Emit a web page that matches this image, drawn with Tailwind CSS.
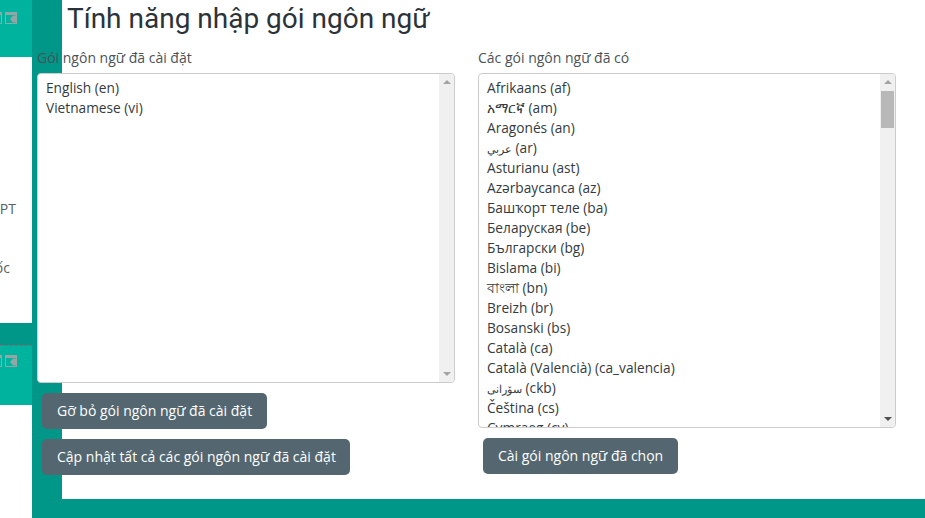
<!DOCTYPE html>
<html lang="vi">
  <head>
    <meta charset="UTF-8" />
    <title>Tính năng nhập gói ngôn ngữ</title>
    <script src="https://cdn.jsdelivr.net/npm/@tailwindcss/browser@4"></script>
  </head>
  <body class="bg-white">
    <div class="flex h-[518px] w-[925px] overflow-hidden font-['Open_Sans','Noto_Sans',sans-serif] text-[14px] leading-[20px] text-[#333b40]">
      <!-- Sidebar, cut off by the window edge -->
      <aside class="w-[32px] shrink-0 overflow-hidden flex flex-col items-end">
        <div class="w-full h-[57px] shrink-0 bg-[#00b39e] flex justify-end items-start pt-[12px] pr-[15px] gap-[3px]">
          <svg class="shrink-0" width="12" height="12" viewBox="0 0 12 12"><rect x="0.5" y="0.5" width="11" height="11" fill="#00b39e" stroke="#93a5a4"/><rect width="12" height="3" fill="#93a5a4"/></svg>
          <svg class="shrink-0" width="12" height="12" viewBox="0 0 12 12"><rect x="0.5" y="0.5" width="11" height="11" fill="#00b39e" stroke="#93a5a4"/><rect width="12" height="3" fill="#93a5a4"/><path d="M8 3.5h3v7H8L5 7z" fill="#93a5a4"/></svg>
        </div>
        <div class="w-full h-[266px] shrink-0 bg-white relative text-[#555f63]">
          <div class="w-[32px] h-[266px] flex flex-col items-end pr-[16px]">
            <span class="mt-[142px]">PT</span>
            <span class="mt-[39px] pr-[6px]">ốc</span>
          </div>
        </div>
        <div class="w-full h-[22px] shrink-0 bg-[#009688]"></div>
        <div class="w-full h-[60px] shrink-0 bg-[#00b39e] border-t border-dashed border-[#8a6470] flex justify-end items-start pt-[9px] pr-[15px] gap-[3px]">
          <svg class="shrink-0" width="12" height="12" viewBox="0 0 12 12"><rect x="0.5" y="0.5" width="11" height="11" fill="#00b39e" stroke="#93a5a4"/><rect width="12" height="3" fill="#93a5a4"/></svg>
          <svg class="shrink-0" width="12" height="12" viewBox="0 0 12 12"><rect x="0.5" y="0.5" width="11" height="11" fill="#00b39e" stroke="#93a5a4"/><rect width="12" height="3" fill="#93a5a4"/><path d="M8 3.5h3v7H8L5 7z" fill="#93a5a4"/></svg>
        </div>
      </aside>

      <main class="flex-1 flex flex-col bg-[#009688]">
        <div class="h-[499px] ml-[30px] bg-white">
          <h1 class="ml-[5px] font-['Roboto',sans-serif] text-[28px] leading-[38px] font-normal text-[#2b3338]">Tính năng nhập gói ngôn ngữ</h1>
          <div class="flex -ml-[25px] mt-[10px]">
            <!-- Installed packs -->
            <section class="w-[418px]">
              <p class="h-[25px] text-[#4a5358]">Gói ngôn ngữ đã cài đặt</p>
              <div class="h-[310px] flex bg-white border border-[#cccccc] rounded-[4px] overflow-hidden">
                <div class="flex-1 pl-[8px] pt-[4px] text-[13.7px]">
                  <div class="h-[20px]">English (en)</div>
                  <div class="h-[20px]">Vietnamese (vi)</div>
                </div>
                <div class="w-[15px] bg-[#f0f0f0] flex flex-col items-center justify-between py-[6px]">
                  <span class="w-0 h-0 border-x-[4px] border-x-transparent border-b-[4px] border-b-[#a3a3a3]"></span>
                  <span class="w-0 h-0 border-x-[4px] border-x-transparent border-t-[4px] border-t-[#a3a3a3]"></span>
                </div>
              </div>
              <div class="flex flex-col items-start gap-[10px] mt-[10px] ml-[5px]">
                <button class="h-[36px] px-[15px] rounded-[5px] bg-[#546770] text-white">Gỡ bỏ gói ngôn ngữ đã cài đặt</button>
                <button class="h-[36px] pl-[15px] pr-[14px] rounded-[5px] bg-[#546770] text-white">Cập nhật tất cả các gói ngôn ngữ đã cài đặt</button>
              </div>
            </section>

            <!-- Available packs -->
            <section class="w-[418px] ml-[23px]">
              <p class="h-[25px] text-[#4a5358]">Các gói ngôn ngữ đã có</p>
              <div class="h-[355px] flex bg-white border border-[#cccccc] rounded-[4px] overflow-hidden">
                <div class="flex-1 pl-[8px] pt-[4px] overflow-hidden text-[13.7px]">
                  <div class="h-[20px]">Afrikaans (af)</div>
                  <div class="h-[20px]">አማርኛ (am)</div>
                  <div class="h-[20px]">Aragonés (an)</div>
                  <div class="h-[20px]"><span class="text-[11px]">عربي</span> (ar)</div>
                  <div class="h-[20px]">Asturianu (ast)</div>
                  <div class="h-[20px]">Azərbaycanca (az)</div>
                  <div class="h-[20px]">Башҡорт теле (ba)</div>
                  <div class="h-[20px]">Беларуская (be)</div>
                  <div class="h-[20px]">Български (bg)</div>
                  <div class="h-[20px]">Bislama (bi)</div>
                  <div class="h-[20px]">বাংলা (bn)</div>
                  <div class="h-[20px]">Breizh (br)</div>
                  <div class="h-[20px]">Bosanski (bs)</div>
                  <div class="h-[20px]">Català (ca)</div>
                  <div class="h-[20px]">Català (Valencià) (ca_valencia)</div>
                  <div class="h-[20px]"><span class="text-[11px]">سۆرانی</span> (ckb)</div>
                  <div class="h-[20px]">Čeština (cs)</div>
                  <div class="h-[20px]">Cymraeg (cy)</div>
                </div>
                <div class="w-[15px] bg-[#f0f0f0] flex flex-col items-center pt-[6px] pb-[6px]">
                  <span class="w-0 h-0 border-x-[4px] border-x-transparent border-b-[4px] border-b-[#a3a3a3]"></span>
                  <span class="w-[13px] h-[37px] mt-[7px] bg-[#b8b8b8]"></span>
                  <span class="mt-auto w-0 h-0 border-x-[4px] border-x-transparent border-t-[4px] border-t-[#505050]"></span>
                </div>
              </div>
              <button class="h-[36px] px-[15px] mt-[10px] ml-[5px] rounded-[5px] bg-[#546770] text-white">Cài gói ngôn ngữ đã chọn</button>
            </section>
          </div>
        </div>
      </main>
    </div>
  </body>
</html>
